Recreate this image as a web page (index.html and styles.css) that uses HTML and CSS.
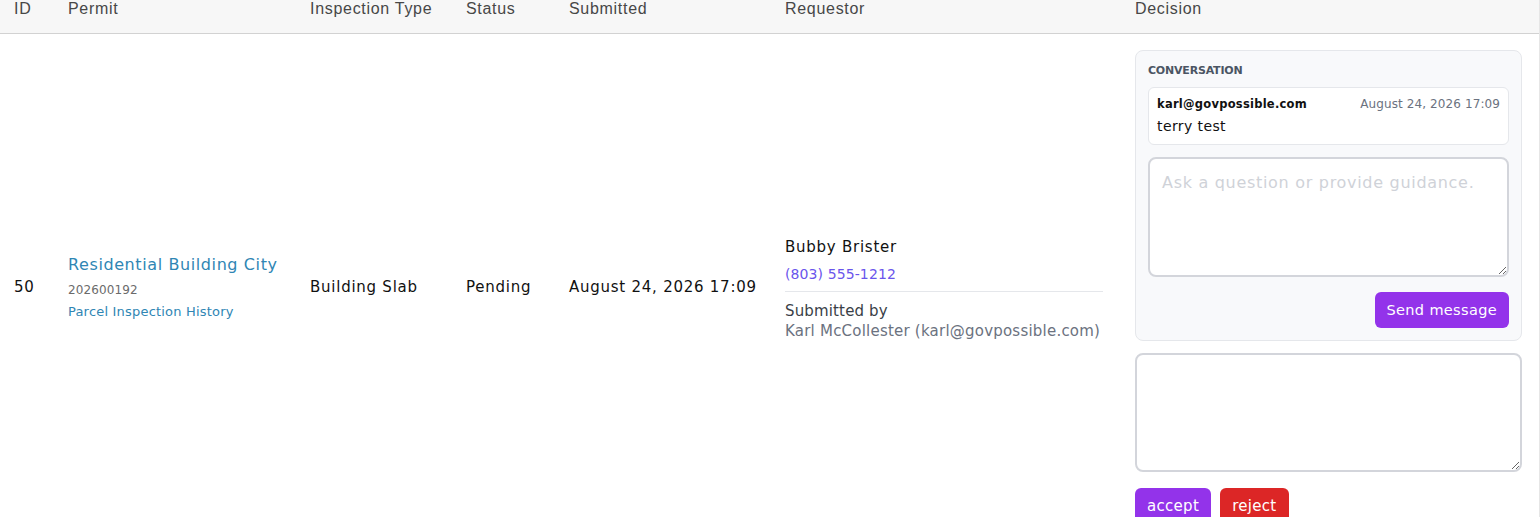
FILE: index.html
```html
<!DOCTYPE html>
<html lang="en">
<head>
<meta charset="utf-8">
<title>Inspection Requests</title>
<link rel="stylesheet" href="styles.css">
</head>
<body>
<div class="table-wrap">
  <table class="requests">
    <colgroup>
      <col class="c-id"><col class="c-permit"><col class="c-type"><col class="c-status"><col class="c-submitted"><col class="c-requestor"><col class="c-decision">
    </colgroup>
    <thead>
      <tr>
        <th>ID</th>
        <th>Permit</th>
        <th>Inspection Type</th>
        <th>Status</th>
        <th>Submitted</th>
        <th>Requestor</th>
        <th>Decision</th>
      </tr>
    </thead>
    <tbody>
      <tr>
        <td class="cell">50</td>
        <td class="cell">
          <div class="permit">
            <a class="permit-name" href="#">Residential Building City</a>
            <span class="permit-no">202600192</span>
            <a class="permit-history" href="#">Parcel Inspection History</a>
          </div>
        </td>
        <td class="cell">Building Slab</td>
        <td class="cell">Pending</td>
        <td class="cell">August 24, 2026 17:09</td>
        <td class="cell">
          <div class="requestor">
            <span class="req-name">Bubby Brister</span>
            <a class="req-phone" href="#">(803) 555-1212</a>
            <div class="req-divider"></div>
            <span class="req-label">Submitted by</span>
            <span class="req-by">Karl McCollester (karl@govpossible.com)</span>
          </div>
        </td>
        <td class="cell decision">
          <div class="convo">
            <div class="convo-title">CONVERSATION</div>
            <div class="msg">
              <div class="msg-head">
                <span class="msg-from">karl@govpossible.com</span>
                <span class="msg-date">August 24, 2026 17:09</span>
              </div>
              <div class="msg-body">terry test</div>
            </div>
            <textarea class="field convo-input" placeholder="Ask a question or provide guidance."></textarea>
            <div class="convo-actions">
              <button class="btn btn-purple btn-send" type="button">Send message</button>
            </div>
          </div>
          <textarea class="field decision-note"></textarea>
          <div class="decision-actions">
            <button class="btn btn-purple" type="button">accept</button>
            <button class="btn btn-red" type="button">reject</button>
          </div>
        </td>
      </tr>
    </tbody>
  </table>
</div>
</body>
</html>
```

FILE: styles.css
```css
html, body {
  margin: 0;
  padding: 0;
  background: #ffffff;
}

body {
  font-family: "DejaVu Sans", "Liberation Sans", sans-serif;
  color: #111111;
  overflow: hidden;
}

.table-wrap {
  width: 1539px;
  border-right: 1px solid #e6e6e6;
}

.requests {
  width: 1539px;
  border-collapse: collapse;
  table-layout: fixed;
}

.c-id { width: 54px; }
.c-permit { width: 242px; }
.c-type { width: 156px; }
.c-status { width: 103px; }
.c-submitted { width: 216px; }
.c-requestor { width: 350px; }
.c-decision { width: 418px; }

.requests th {
  font-family: "Liberation Sans", Arial, sans-serif;
  font-weight: 400;
  font-size: 16px;
  line-height: 18px;
  letter-spacing: 0.7px;
  color: #474747;
  text-align: left;
  vertical-align: top;
  height: 33px;
  padding: 0 14px;
  box-sizing: border-box;
  background: #f7f7f7;
  border-bottom: 1px solid #d2d2d2;
  white-space: nowrap;
}

.cell {
  font-size: 15px;
  line-height: 20px;
  letter-spacing: 0.75px;
  vertical-align: middle;
  padding: 0 14px;
  color: #111111;
  white-space: nowrap;
}

/* permit */
.permit {
  display: flex;
  flex-direction: column;
  align-items: flex-start;
}

.permit-name {
  font-size: 16px;
  line-height: 24px;
  letter-spacing: 0.6px;
  color: #2f86b4;
  text-decoration: none;
}

.permit-no {
  margin-top: 4px;
  font-size: 12px;
  line-height: 18px;
  letter-spacing: 0.1px;
  color: #6b6b6b;
}

.permit-history {
  margin-top: 4px;
  font-size: 13px;
  line-height: 18px;
  letter-spacing: 0.2px;
  color: #2f86b4;
  text-decoration: none;
}

/* requestor */
.requestor {
  display: flex;
  flex-direction: column;
  align-items: flex-start;
}

.req-name {
  font-size: 15px;
  line-height: 26px;
  letter-spacing: 0.75px;
  color: #111111;
  margin-top: 1px;
}

.req-phone {
  margin-top: 3px;
  font-size: 14px;
  line-height: 22px;
  letter-spacing: 0.1px;
  color: #6a55ec;
  text-decoration: none;
}

.req-divider {
  align-self: stretch;
  height: 1px;
  background: #e5e7eb;
  margin: 6px 4px 9px 0;
}

.req-label {
  font-size: 15px;
  line-height: 20px;
  letter-spacing: 0.15px;
  color: #3a3f47;
}

.req-by {
  font-size: 15px;
  line-height: 20px;
  letter-spacing: 0.22px;
  color: #6b7280;
}

/* decision */
.decision {
  padding: 16px 17px 16px 14px;
  letter-spacing: 0;
}

.convo {
  background: #f8f9fb;
  border: 1px solid #e5e7eb;
  border-radius: 8px;
  padding: 12px;
  display: flex;
  flex-direction: column;
}

.convo-title {
  font-size: 11px;
  line-height: 16px;
  font-weight: 700;
  color: #4b5563;
  letter-spacing: -0.2px;
  margin-bottom: 8px;
}

.msg {
  background: #ffffff;
  border: 1px solid #e5e7eb;
  border-radius: 6px;
  padding: 7px 8px;
}

.msg-head {
  display: flex;
  justify-content: space-between;
  align-items: baseline;
  line-height: 18px;
  margin-bottom: 2px;
}

.msg-from {
  font-size: 11.5px;
  font-weight: 700;
  color: #111111;
  letter-spacing: 0.25px;
}

.msg-date {
  font-size: 12px;
  color: #6b7280;
  letter-spacing: 0.1px;
}

.msg-body {
  font-size: 14px;
  line-height: 22px;
  letter-spacing: 0.4px;
  color: #111111;
}

.field {
  display: block;
  width: 100%;
  box-sizing: border-box;
  border: 2px solid #d3d5db;
  border-radius: 8px;
  background: #ffffff;
  font-family: "DejaVu Sans", "Liberation Sans", sans-serif;
  font-size: 16px;
  letter-spacing: 0.7px;
  padding: 14px 12px 12px;
  margin: 0;
  resize: vertical;
  outline: none;
}

.field::placeholder {
  color: #cfd2d8;
}

.convo-input {
  margin-top: 12px;
  height: 120px;
}

.convo-actions {
  display: flex;
  justify-content: flex-end;
  margin-top: 15px;
}

.btn {
  font-family: "DejaVu Sans", "Liberation Sans", sans-serif;
  border: none;
  border-radius: 6px;
  color: #ffffff;
  height: 36px;
  padding: 0 12px;
  font-size: 15px;
  letter-spacing: 0.3px;
  cursor: pointer;
}

.btn-send {
  font-size: 14.5px;
  letter-spacing: 0.35px;
}

.btn-purple {
  background: #9333ea;
}

.btn-red {
  background: #dc2626;
}

.decision-note {
  margin-top: 12px;
  height: 119px;
}

.decision-actions {
  display: flex;
  gap: 9px;
  margin-top: 16px;
}
```
